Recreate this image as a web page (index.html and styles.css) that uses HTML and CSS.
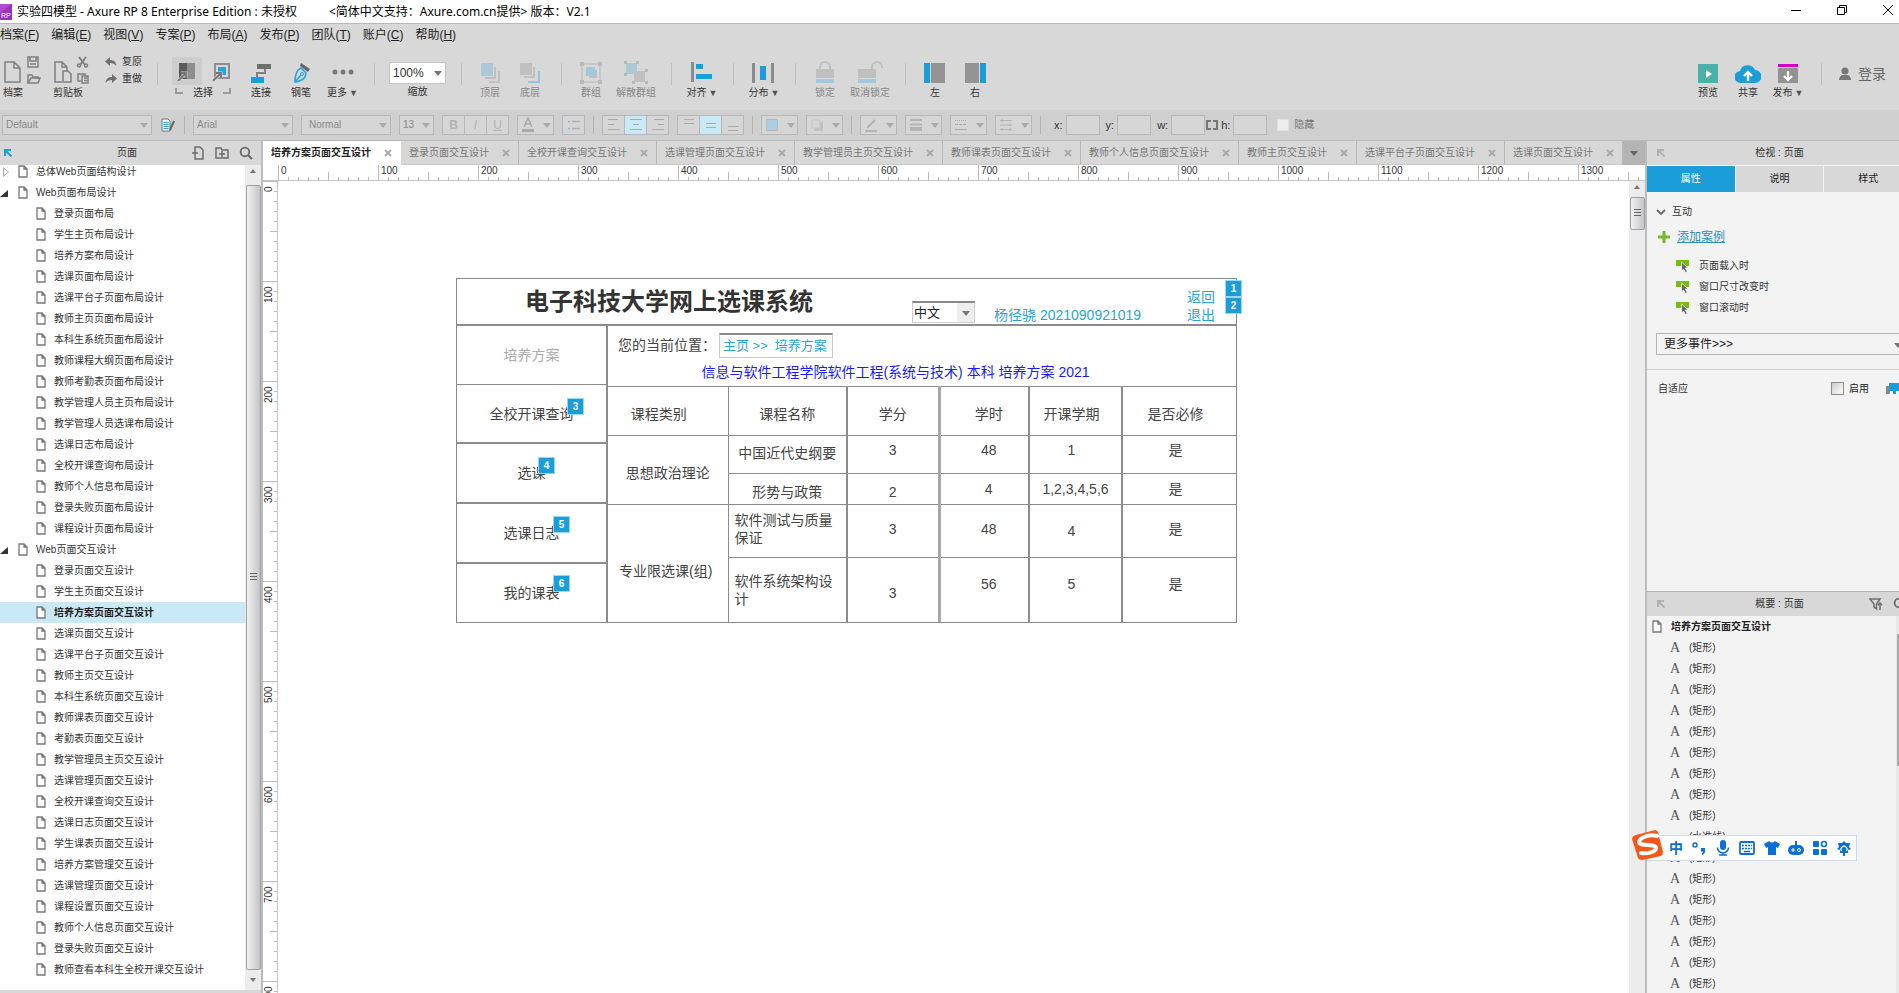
FILE: index.html
```html
<!DOCTYPE html>
<html lang="zh-CN">
<head>
<meta charset="utf-8">
<title>实验四模型 - Axure RP 8</title>
<link rel="stylesheet" href="styles.css">
</head>
<body>
<svg class="defs" aria-hidden="true">
  <symbol id="doc" viewBox="0 0 10 13"><path d="M1 1h5l3 3v8H1z M6 1v3h3" fill="#fff" stroke="#777" stroke-width="1.3"/></symbol>
  <symbol id="x" viewBox="0 0 8 8"><path d="M1 1l6 6M7 1l-6 6" stroke="#a8a8a8" stroke-width="1.8"/></symbol>
  <symbol id="down" viewBox="0 0 8 5"><path d="M0 0h8L4 5z" fill="currentColor"/></symbol>
  <symbol id="corner" viewBox="0 0 8 8"><path d="M1 7V1h6M1.500 1.500l6 6" fill="none" stroke="currentColor" stroke-width="2"/></symbol>
  <symbol id="lens" viewBox="0 0 13 13"><circle cx="5.500" cy="5.500" r="4" fill="none" stroke="#6c6c6c" stroke-width="1.700"/><path d="M8.500 8.500l3.500 3.500" stroke="#6c6c6c" stroke-width="2"/></symbol>
  <symbol id="event" viewBox="0 0 14 14"><path d="M0 1h13v6H0z" fill="#76bd0f"/><path d="M5.500 3v9l2-2 1.800 3.500 2-1L9.500 9H12z" fill="#666" stroke="#f3f3f3" stroke-width=".8"/></symbol>
</svg>

<header class="titlebar">
  <svg class="logo" viewBox="0 0 12 16"><path d="M0 0h12v16H0z" fill="#9b2fc0"/><path d="M0 0h12L0 9z" fill="#b04ad0"/><text x="1" y="14" font-size="7" fill="#fff" font-family="Liberation Sans">RP</text></svg>
  <h1 class="window-name">实验四模型 - Axure RP 8 Enterprise Edition : 未授权</h1>
  <span class="window-note">&lt;简体中文支持：Axure.com.cn提供&gt; 版本：V2.1</span>
  <div class="window-buttons">
    <button aria-label="最小化"><svg viewBox="0 0 12 12"><path d="M1 6.500h10" stroke="#000"/></svg></button>
    <button aria-label="还原"><svg viewBox="0 0 12 12"><path d="M1.500 3.500h7v7h-7zM3.500 3.500v-2h7v7h-2" fill="none" stroke="#000"/></svg></button>
    <button aria-label="关闭"><svg viewBox="0 0 12 12"><path d="M1 1l10 10M11 1L1 11" stroke="#000"/></svg></button>
  </div>
</header>

<nav class="menubar">
  <button>档案(<u>F</u>)</button><button>编辑(<u>E</u>)</button><button>视图(<u>V</u>)</button><button>专案(<u>P</u>)</button><button>布局(<u>A</u>)</button><button>发布(<u>P</u>)</button><button>团队(<u>T</u>)</button><button>账户(<u>C</u>)</button><button>帮助(<u>H</u>)</button>
</nav>

<div class="toolbar">
  <button class="tool pack"><svg viewBox="0 0 50 32" fill="none" stroke="#808080" stroke-width="1.500"><path d="M5 7h9l6 6v14H5zM14 7v6h6"/><path d="M28 2h10v10H28zM30 2v4h6V2M30 9h6" /><path d="M28 28V20h4l1 2h5v2M28 28l3-5h9l-2 5z"/></svg><span>档案</span></button>
  <button class="tool pack"><svg viewBox="0 0 50 32" fill="none" stroke="#808080" stroke-width="1.500"><path d="M12 27H5V7h7l5 5v4M12 7v5h5M13 16h5l3 3v8h-8z"/><path d="M29 2l6 8M36 2l-6 8" stroke-width="2"/><circle cx="29" cy="10.500" r="1.500"/><circle cx="36" cy="10.500" r="1.500"/><path d="M31 26h-3v-7h7v2M32 21h6v7h-6zM34 23h3M34 25.500h3"/></svg><span>剪贴板</span></button>
  <div class="history">
    <button><svg viewBox="0 0 12 10"><path d="M0 4.500L5 0v3c4 0 6 2 6.500 6C10 7 8 6 5 6v3z" fill="#707070"/></svg>复原</button>
    <button><svg viewBox="0 0 12 10"><path d="M12 4.500L7 0v3C3 3 1 5 .500 9 2 7 4 6 7 6v3z" fill="#707070"/></svg>重做</button>
  </div>
  <i class="sep"></i>
  <div class="picker">
    <div class="picker-modes">
      <button class="on" aria-label="相交选择"><svg viewBox="0 0 20 20"><path d="M2 2h8v16H2z" fill="#5c5c5c"/><path d="M10 2h8v16h-8z" fill="#8e8e8e"/><path d="M1 20l7-7M4 12h5v5" fill="none" stroke="#cdcdcd" stroke-width="3"/><path d="M1 20l7-7M4 12h5v5" fill="none" stroke="#777" stroke-width="1.800"/></svg></button>
      <button aria-label="包含选择"><svg viewBox="0 0 20 20"><path d="M3 3h14v14H3z" fill="none" stroke="#8e8e8e" stroke-width="2"/><path d="M6 6h8v8H6z" fill="#2ba2dc"/><path d="M1 20l7-7M4 12h5v5" fill="none" stroke="#d8d8d8" stroke-width="3"/><path d="M1 20l7-7M4 12h5v5" fill="none" stroke="#777" stroke-width="1.800"/></svg></button>
    </div>
    <div class="picker-label"><i class="hook-left"></i>选择<i class="hook-right"></i></div>
  </div>
  <button class="tool"><svg viewBox="0 0 26 26"><path d="M9 3h14v5H9z" fill="#6e6e6e"/><path d="M3 16h13v6H3z" fill="#1b9dd9"/><path d="M17 8v4H9v4" fill="none" stroke="#808080" stroke-width="2"/></svg><span>连接</span></button>
  <button class="tool"><svg viewBox="0 0 26 26"><path d="M7 21c0-7 1-12 6-14l5 5c0 5-4 8-11 9zM7 21l6-7" fill="none" stroke="#2ba2dc" stroke-width="1.600"/><circle cx="14" cy="13" r="1.500" fill="none" stroke="#2ba2dc"/><path d="M13 2l9 6-2 3-8-6z" fill="#666"/></svg><span>钢笔</span></button>
  <button class="tool w43"><svg viewBox="0 0 26 26" fill="#777"><circle cx="5" cy="11" r="2.500"/><circle cx="13" cy="11" r="2.500"/><circle cx="21" cy="11" r="2.500"/></svg><span>更多<b>▼</b></span></button>
  <i class="sep"></i>
  <div class="zoomer"><select id="zoom"><option>100%</option></select><svg class="caret"><use href="#down"/></svg><label for="zoom">缩放</label></div>
  <i class="sep"></i>
  <button class="tool w38 off"><svg viewBox="0 0 26 26"><path d="M4 2h12v13H4z" fill="#7fbbd9"/><path d="M17 6v10H8v2h11V6zM21 10v10H12v2h11V10z" fill="#aaa"/></svg><span>顶层</span></button>
  <button class="tool w42 off"><svg viewBox="0 0 26 26"><path d="M3 2h12v12H3z" fill="#aaa"/><path d="M16 6v9H7v2h11V6z" fill="#aaa"/><path d="M21 10v10H11v2h12V10z" fill="#53b2df"/></svg><span>底层</span></button>
  <i class="sep"></i>
  <button class="tool off"><svg viewBox="0 0 26 26"><path d="M4 3h18v18H4z" fill="none" stroke="#999"/><path d="M11 9h8v8h-8z" fill="#aaa"/><path d="M8 6h9v9H8z" fill="#6fb9de"/><path d="M2 1h4v4H2zM20 1h4v4h-4zM2 19h4v4H2zM20 19h4v4h-4z" fill="#999"/></svg><span>群组</span></button>
  <button class="tool w50 off"><svg viewBox="0 0 26 26"><path d="M3 2h11v11H3z" fill="#7fbbd9"/><path d="M11 10h11v11H11z" fill="#aaa"/><path d="M1 0h3v3H1zM13 0h3v3h-3zM1 12h3v3H1zM22 8h3v3h-3zM9 20h3v3H9zM22 20h3v3h-3z" fill="#999"/></svg><span>解散群组</span></button>
  <i class="sep"></i>
  <button class="tool w42"><svg viewBox="0 0 26 26"><path d="M2 1h3v20H2z" fill="#8c8c8c"/><path d="M7 3h7v5H7zM7 13h16v5H7z" fill="#1b9dd9"/></svg><span>对齐<b>▼</b></span></button>
  <i class="sep"></i>
  <button class="tool w42"><svg viewBox="0 0 26 26"><path d="M1 2h3v20H1zM20 2h3v20h-3z" fill="#8c8c8c"/><path d="M9 5h6v14H9z" fill="#1b9dd9"/></svg><span>分布<b>▼</b></span></button>
  <i class="sep"></i>
  <button class="tool off"><svg viewBox="0 0 26 26"><path d="M8 8V6a5 5 0 0 1 10 0v2" fill="none" stroke="#aaa" stroke-width="2"/><path d="M4 8h18v9H4z" fill="#aaa"/><path d="M4 18h18v4H4z" fill="#6fb9de"/></svg><span>锁定</span></button>
  <button class="tool w50 off"><svg viewBox="0 0 26 26"><path d="M15 8V6a5 5 0 0 1 10 0v1" fill="none" stroke="#aaa" stroke-width="2"/><path d="M1 8h18v9H1z" fill="#aaa"/><path d="M1 18h18v4H1z" fill="#6fb9de"/></svg><span>取消锁定</span></button>
  <i class="sep"></i>
  <button class="tool"><svg viewBox="0 0 26 26"><path d="M2 2h6v20H2z" fill="#1b9dd9"/><path d="M9 2h14v20H9z" fill="#949494"/></svg><span>左</span></button>
  <button class="tool"><svg viewBox="0 0 26 26"><path d="M3 2h14v20H3z" fill="#949494"/><path d="M18 2h6v20h-6z" fill="#1b9dd9"/></svg><span>右</span></button>
  <div class="toolbar-end">
    <button class="tool"><svg viewBox="0 0 26 26"><path d="M3 3h20v19H3z" fill="#4bb0a5"/><path d="M11 9l6 4-6 4z" fill="#fff"/></svg><span>预览</span></button>
    <button class="tool"><svg viewBox="0 0 26 26"><path d="M6 22a6 6 0 0 1-1-12 8 8 0 0 1 15-1 6.500 6.500 0 0 1 0 13z" fill="#1b9dd9"/><path d="M13 20v-8M9 15l4-4 4 4" fill="none" stroke="#fff" stroke-width="2.400"/></svg><span>共享</span></button>
    <button class="tool"><svg viewBox="0 0 26 26"><path d="M3 3h20v3H3z" fill="#d800c0"/><path d="M3 7h20v15H3z" fill="#929292"/><path d="M13 10v9M9 15l4 4 4-4" fill="none" stroke="#fff" stroke-width="2.200"/></svg><span>发布<b>▼</b></span></button>
    <i class="sep"></i>
    <button class="login"><svg viewBox="0 0 14 14" fill="#777"><circle cx="7" cy="4" r="3.500"/><path d="M1 13c0-3 2-5 4-5h4c2 0 4 2 4 5z"/></svg>登录</button>
  </div>
</div>

<div class="formatbar">
  <div class="drop drop-style"><select aria-label="样式"><option>Default</option></select><svg class="caret"><use href="#down"/></svg></div>
  <button class="plain" aria-label="样式管理"><svg viewBox="0 0 14 14"><path d="M1 1h6l2 2v10H1z" fill="#e9f5fb" stroke="#777"/><path d="M2.500 4.500h5M2.500 6.500h5M2.500 8.500h5M2.500 10.500h5" stroke="#2ba2dc"/><path d="M9 12l4-9" stroke="#666" stroke-width="2"/></svg></button>
  <i class="rule"></i>
  <div class="drop drop-font"><select aria-label="字体"><option>Arial</option></select><svg class="caret"><use href="#down"/></svg></div>
  <div class="drop drop-weight"><select aria-label="字形"><option>Normal</option></select><svg class="caret"><use href="#down"/></svg></div>
  <div class="drop drop-size"><select aria-label="字号"><option>13</option></select><svg class="caret"><use href="#down"/></svg></div>
  <div class="seg"><button><b>B</b></button><button><i>I</i></button><button><u>U</u></button></div>
  <button class="split" aria-label="文字颜色"><svg viewBox="0 0 16 16"><path d="M4 10l4-9 4 9M5.500 7h5" fill="none" stroke="#aaa" stroke-width="1.500"/><path d="M2 12h12v3H2z" fill="#aaa"/></svg><svg class="caret"><use href="#down"/></svg></button>
  <div class="seg"><button aria-label="列表"><svg viewBox="0 0 16 16"><path d="M2 4.500h2M2 11.500h2" stroke="#7fbbd9" stroke-width="1.500"/><path d="M6 4.500h8M6 11.500h8" stroke="#b0b0b0" stroke-width="1.500"/></svg></button></div>
  <i class="rule"></i>
  <div class="seg">
    <button aria-label="左对齐"><svg viewBox="0 0 16 16"><path d="M2 2.500h10M2 7.500h6M2 12.500h12"/></svg></button>
    <button class="on" aria-label="居中"><svg viewBox="0 0 16 16"><path d="M2 2.500h12M5 7.500h6M2 12.500h12"/></svg></button>
    <button aria-label="右对齐"><svg viewBox="0 0 16 16"><path d="M4 2.500h10M8 7.500h6M2 12.500h12"/></svg></button>
  </div>
  <div class="seg">
    <button aria-label="顶部"><svg viewBox="0 0 16 16"><path d="M3 2.500h10M3 6.500h10"/></svg></button>
    <button class="on" aria-label="中部"><svg viewBox="0 0 16 16"><path d="M3 6.500h10M3 10.500h10"/></svg></button>
    <button aria-label="底部"><svg viewBox="0 0 16 16"><path d="M3 9.500h10M3 13.500h10"/></svg></button>
  </div>
  <i class="rule"></i>
  <button class="split" aria-label="填充"><svg viewBox="0 0 16 16"><path d="M2.500 2.500h11v11h-11z" fill="#a9cfe3" stroke="#b8b8b8"/></svg><svg class="caret"><use href="#down"/></svg></button>
  <button class="split" aria-label="阴影"><svg viewBox="0 0 16 16"><path d="M5 5h9v9H5z" fill="#c2c2c2"/><path d="M3 3h8v8H3z" fill="#d6d6d6" stroke="#c4c4c4"/></svg><svg class="caret"><use href="#down"/></svg></button>
  <i class="rule"></i>
  <button class="split" aria-label="线条颜色"><svg viewBox="0 0 16 16"><path d="M4 11l8-8M2 14h12" stroke="#b4b4b4" stroke-width="2"/></svg><svg class="caret"><use href="#down"/></svg></button>
  <button class="split" aria-label="线宽"><svg viewBox="0 0 16 16"><path d="M2 3h12M2 7.500h12" stroke="#b4b4b4" stroke-width="2"/><path d="M2 12h12" stroke="#b4b4b4" stroke-width="4"/></svg><svg class="caret"><use href="#down"/></svg></button>
  <button class="split" aria-label="线型"><svg viewBox="0 0 16 16"><path d="M2 3.500h12" stroke="#aaa" stroke-dasharray="1 1"/><path d="M2 7.500h12" stroke="#aaa" stroke-dasharray="3 1"/><path d="M2 12.500h12" stroke="#aaa"/></svg><svg class="caret"><use href="#down"/></svg></button>
  <button class="split" aria-label="箭头"><svg viewBox="0 0 16 16"><path d="M2 3.500h12M2 8h12M2 12.500h12M4 2v3M12 6.500v3M4 11v3M12 11v3" stroke="#b4b4b4"/></svg><svg class="caret"><use href="#down"/></svg></button>
  <i class="rule"></i>
  <div class="geometry">
    <label class="field">x:<input></label>
    <label class="field">y:<input></label>
    <label class="field">w:<input></label>
    <label class="field linked"><svg viewBox="0 0 12 10"><path d="M5 1H1v8h4M7 1h4v8H7" fill="none" stroke="#777" stroke-width="2"/></svg>h:<input></label>
  </div>
  <label class="hide"><input type="checkbox">隐藏</label>
</div>

<div class="workspace">
  <aside class="pages">
    <div class="panel-head"><svg class="pin blue"><use href="#corner"/></svg><h2>页面</h2>
      <div class="head-tools">
        <button aria-label="新增页面"><svg viewBox="0 0 14 14"><path d="M4 4V1h5l3 3v9H4v-3M1 7h6M4 4v6" fill="none" stroke="#6c6c6c" stroke-width="1.500"/></svg></button>
        <button aria-label="新增文件夹"><svg viewBox="0 0 14 14"><path d="M1 12V2h5l1 2h6v8zM4 8h6M7 5v6" fill="none" stroke="#6c6c6c" stroke-width="1.500"/></svg></button>
        <button aria-label="搜索"><svg viewBox="0 0 13 13"><use href="#lens"/></svg></button>
      </div>
    </div>
    <div class="pages-body">
      <ul class="tree">
        <li class="top shut"><a href="#"><svg><use href="#doc"/></svg>总体Web页面结构设计</a></li>
        <li class="top open"><a href="#"><svg><use href="#doc"/></svg>Web页面布局设计</a></li>
        <li><a href="#"><svg><use href="#doc"/></svg>登录页面布局</a></li>
        <li><a href="#"><svg><use href="#doc"/></svg>学生主页布局设计</a></li>
        <li><a href="#"><svg><use href="#doc"/></svg>培养方案布局设计</a></li>
        <li><a href="#"><svg><use href="#doc"/></svg>选课页面布局设计</a></li>
        <li><a href="#"><svg><use href="#doc"/></svg>选课平台子页面布局设计</a></li>
        <li><a href="#"><svg><use href="#doc"/></svg>教师主页页面布局设计</a></li>
        <li><a href="#"><svg><use href="#doc"/></svg>本科生系统页面布局设计</a></li>
        <li><a href="#"><svg><use href="#doc"/></svg>教师课程大纲页面布局设计</a></li>
        <li><a href="#"><svg><use href="#doc"/></svg>教师考勤表页面布局设计</a></li>
        <li><a href="#"><svg><use href="#doc"/></svg>教学管理人员主页布局设计</a></li>
        <li><a href="#"><svg><use href="#doc"/></svg>教学管理人员选课布局设计</a></li>
        <li><a href="#"><svg><use href="#doc"/></svg>选课日志布局设计</a></li>
        <li><a href="#"><svg><use href="#doc"/></svg>全校开课查询布局设计</a></li>
        <li><a href="#"><svg><use href="#doc"/></svg>教师个人信息布局设计</a></li>
        <li><a href="#"><svg><use href="#doc"/></svg>登录失败页面布局设计</a></li>
        <li><a href="#"><svg><use href="#doc"/></svg>课程设计页面布局设计</a></li>
        <li class="top open"><a href="#"><svg><use href="#doc"/></svg>Web页面交互设计</a></li>
        <li><a href="#"><svg><use href="#doc"/></svg>登录页面交互设计</a></li>
        <li><a href="#"><svg><use href="#doc"/></svg>学生主页面交互设计</a></li>
        <li class="current"><a href="#"><svg><use href="#doc"/></svg>培养方案页面交互设计</a></li>
        <li><a href="#"><svg><use href="#doc"/></svg>选课页面交互设计</a></li>
        <li><a href="#"><svg><use href="#doc"/></svg>选课平台子页面交互设计</a></li>
        <li><a href="#"><svg><use href="#doc"/></svg>教师主页交互设计</a></li>
        <li><a href="#"><svg><use href="#doc"/></svg>本科生系统页面交互设计</a></li>
        <li><a href="#"><svg><use href="#doc"/></svg>教师课表页面交互设计</a></li>
        <li><a href="#"><svg><use href="#doc"/></svg>考勤表页面交互设计</a></li>
        <li><a href="#"><svg><use href="#doc"/></svg>教学管理员主页交互设计</a></li>
        <li><a href="#"><svg><use href="#doc"/></svg>选课管理页面交互设计</a></li>
        <li><a href="#"><svg><use href="#doc"/></svg>全校开课查询交互设计</a></li>
        <li><a href="#"><svg><use href="#doc"/></svg>选课日志页面交互设计</a></li>
        <li><a href="#"><svg><use href="#doc"/></svg>学生课表页面交互设计</a></li>
        <li><a href="#"><svg><use href="#doc"/></svg>培养方案管理交互设计</a></li>
        <li><a href="#"><svg><use href="#doc"/></svg>选课管理页面交互设计</a></li>
        <li><a href="#"><svg><use href="#doc"/></svg>课程设置页面交互设计</a></li>
        <li><a href="#"><svg><use href="#doc"/></svg>教师个人信息页面交互设计</a></li>
        <li><a href="#"><svg><use href="#doc"/></svg>登录失败页面交互设计</a></li>
        <li><a href="#"><svg><use href="#doc"/></svg>教师查看本科生全校开课交互设计</a></li>
      </ul>
      <div class="scroll"><i class="arrow up"></i><div class="thumb"></div><i class="arrow"></i></div>
    </div>
  </aside>

  <main class="editor">
    <div class="tabs">
      <button class="tab on">培养方案页面交互设计<svg><use href="#x"/></svg></button>
      <button class="tab">登录页面交互设计<svg><use href="#x"/></svg></button>
      <button class="tab">全校开课查询交互设计<svg><use href="#x"/></svg></button>
      <button class="tab">选课管理页面交互设计<svg><use href="#x"/></svg></button>
      <button class="tab">教学管理员主页交互设计<svg><use href="#x"/></svg></button>
      <button class="tab">教师课表页面交互设计<svg><use href="#x"/></svg></button>
      <button class="tab">教师个人信息页面交互设计<svg><use href="#x"/></svg></button>
      <button class="tab">教师主页交互设计<svg><use href="#x"/></svg></button>
      <button class="tab">选课平台子页面交互设计<svg><use href="#x"/></svg></button>
      <button class="tab">选课页面交互设计<svg><use href="#x"/></svg></button>
      <button class="tab-more" aria-label="更多页签"><svg><use href="#down"/></svg></button>
    </div>
    <div class="ruler-x"><span>0</span><span>100</span><span>200</span><span>300</span><span>400</span><span>500</span><span>600</span><span>700</span><span>800</span><span>900</span><span>1000</span><span>1100</span><span>1200</span><span>1300</span></div>
    <div class="stage">
      <div class="ruler-y"><span>0</span><span>100</span><span>200</span><span>300</span><span>400</span><span>500</span><span>600</span><span>700</span><span>800</span></div>
      <div class="canvas">
        <div class="mock">
          <div class="mock-head">
            <h2>电子科技大学网上选课系统</h2>
            <div class="lang"><select aria-label="语言"><option>中文</option></select><svg class="caret"><use href="#down"/></svg></div>
            <span class="user">杨径骁 2021090921019</span>
            <div class="exits"><a href="#">返回</a><a href="#">退出</a></div>
          </div>
          <div class="mock-body">
            <nav class="mock-nav">
              <button class="idle">培养方案</button><button>全校开课查询</button><button>选课</button><button>选课日志</button><button>我的课表</button>
            </nav>
            <div class="mock-main">
              <div class="where"><span>您的当前位置：</span><div class="crumbs"><a href="#">主页 &gt;&gt;</a><a href="#">培养方案</a></div></div>
              <p class="plan">信息与软件工程学院软件工程(系统与技术) 本科 培养方案 2021</p>
              <table>
                <colgroup><col class="c1"><col class="c2"><col class="c3"><col class="c4"><col class="c5"><col></colgroup>
                <thead><tr class="r1"><th class="kind">课程类别</th><th>课程名称</th><th>学分</th><th class="hours">学时</th><th class="term">开课学期</th><th class="must">是否必修</th></tr></thead>
                <tbody>
                  <tr class="r2"><td rowspan="2" class="down">思想政治理论</td><td class="lift">中国近代史纲要</td><td class="up">3</td><td class="up hours">48</td><td class="up term">1</td><td class="up must">是</td></tr>
                  <tr class="r3"><td class="down">形势与政策</td><td class="down">2</td><td class="hours">4</td><td>1,2,3,4,5,6</td><td class="must">是</td></tr>
                  <tr class="r4"><td rowspan="2" class="low">专业限选课(组)</td><td class="wrap lift">软件测试与质量保证</td><td class="lift">3</td><td class="hours lift">48</td><td class="term">4</td><td class="must lift">是</td></tr>
                  <tr class="r5"><td class="wrap">软件系统架构设计</td><td class="down">3</td><td class="high hours">56</td><td class="high term">5</td><td class="high must">是</td></tr>
                </tbody>
              </table>
            </div>
          </div>
          <i class="note n1">1</i><i class="note n2">2</i><i class="note n3">3</i><i class="note n4">4</i><i class="note n5">5</i><i class="note n6">6</i>
        </div>
      </div>
      <div class="scroll"><i class="arrow up"></i><div class="thumb short"></div></div>
    </div>
  </main>

  <aside class="side">
    <section class="inspector">
      <div class="panel-head"><svg class="pin"><use href="#corner"/></svg><h2>检视 : 页面</h2></div>
      <div class="side-tabs"><button class="on">属性</button><button>说明</button><button>样式</button></div>
      <div class="group-name"><svg viewBox="0 0 10 8"><path d="M1 2l4 4 4-4" fill="none" stroke="#666" stroke-width="1.800"/></svg>互动</div>
      <div class="add-case"><svg viewBox="0 0 12 12"><path d="M6 0v12M0 6h12" stroke="#76b82a" stroke-width="3"/></svg><a href="#">添加案例</a></div>
      <ul class="events">
        <li><svg><use href="#event"/></svg>页面载入时</li>
        <li><svg><use href="#event"/></svg>窗口尺寸改变时</li>
        <li><svg><use href="#event"/></svg>窗口滚动时</li>
      </ul>
      <div class="more-events"><select aria-label="更多事件"><option>更多事件&gt;&gt;&gt;</option></select><svg class="caret"><use href="#down"/></svg></div>
      <div class="adaptive"><span>自适应</span><label><input type="checkbox">启用</label><svg viewBox="0 0 18 12"><path d="M0 3h4v8H0z" fill="#888"/><path d="M3 0h15v8h-2v3h-3V8h-3v3H7V8H3z" fill="#1b9dd9"/></svg></div>
    </section>
    <section class="outline">
      <div class="panel-head"><svg class="pin"><use href="#corner"/></svg><h2>概要 : 页面</h2>
        <div class="head-tools"><button aria-label="筛选"><svg viewBox="0 0 14 14"><path d="M1 2h10L7.500 7v5L5 10V7zM11 13V6M9 8l2-2 2 2" fill="none" stroke="#6c6c6c" stroke-width="1.500"/></svg></button><button aria-label="搜索"><svg viewBox="0 0 13 13"><use href="#lens"/></svg></button></div>
      </div>
      <div class="outline-body">
        <ul class="widgets">
          <li class="root"><svg><use href="#doc"/></svg>培养方案页面交互设计</li>
          <li><i>A</i>(矩形)</li><li><i>A</i>(矩形)</li><li><i>A</i>(矩形)</li><li><i>A</i>(矩形)</li><li><i>A</i>(矩形)</li><li><i>A</i>(矩形)</li><li><i>A</i>(矩形)</li><li><i>A</i>(矩形)</li><li><i>A</i>(矩形)</li>
          <li><i class="dash"></i>(水准线)</li>
          <li><i>A</i>(矩形)</li><li><i>A</i>(矩形)</li><li><i>A</i>(矩形)</li><li><i>A</i>(矩形)</li><li><i>A</i>(矩形)</li><li><i>A</i>(矩形)</li><li><i>A</i>(矩形)</li>
        </ul>
        <div class="outline-scroll"></div>
      </div>
    </section>
  </aside>
</div>

<div class="ime">
  <svg class="ime-logo" viewBox="0 0 32 30"><path d="M4 5L23 0q2 0 3 2l5 20q0 3-2 4L10 30q-3 0-4-2L0 9q0-3 4-4z" fill="#f4571b"/><path d="M25 6C18 4 8 7 7 12c0 5 17 1 17 6 0 4-9 6-15 5" fill="none" stroke="#fff" stroke-width="4" stroke-linecap="round"/></svg>
  <b>中</b>
  <svg viewBox="0 0 16 16"><circle cx="4" cy="5" r="2" fill="none" stroke="#0a6fd8" stroke-width="1.500"/><path d="M10 8h4v3q0 3-3 4v-2q1-.5 1-1.500h-2z" fill="#0a6fd8"/></svg>
  <svg viewBox="0 0 16 16"><rect x="5" y="0" width="6" height="10" rx="3" fill="#0a6fd8"/><path d="M2.500 7.500a5.500 5.500 0 0 0 11 0M8 13v2M4 15h8" fill="none" stroke="#0a6fd8" stroke-width="1.500"/></svg>
  <svg viewBox="0 0 16 16"><rect x="1" y="2" width="14" height="12" rx="1" fill="none" stroke="#0a6fd8" stroke-width="1.800"/><path d="M3 5.500h10M3 8.500h10" stroke="#0a6fd8" stroke-width="1.600" stroke-dasharray="2 1"/><path d="M5 11.500h6" stroke="#0a6fd8" stroke-width="1.600"/></svg>
  <svg viewBox="0 0 16 16"><path d="M0 4l5-3q3 3 6 0l5 3-2 4-2-1v8H4V7L2 8z" fill="#0a6fd8"/></svg>
  <svg viewBox="0 0 16 16"><rect x="0" y="5" width="16" height="10" rx="5" fill="#0a6fd8"/><path d="M8 1v5" stroke="#0a6fd8" stroke-width="2"/><path d="M3 10h4M5 8v4" stroke="#fff"/><circle cx="11" cy="10" r="1.500" fill="none" stroke="#fff"/></svg>
  <svg viewBox="0 0 16 16"><rect x="1" y="1" width="6" height="6" rx="1" fill="#0a6fd8"/><circle cx="12" cy="4" r="2.500" fill="none" stroke="#0a6fd8" stroke-width="1.600"/><rect x="1" y="9" width="6" height="6" rx="1" fill="#0a6fd8"/><rect x="9" y="9" width="6" height="6" rx="1" fill="#0a6fd8"/></svg>
  <svg viewBox="0 0 16 16"><path d="M8 1l2 2h4l-1 4 2 2-3 1v3H4v-3L1 9l2-2-1-4h4z" fill="#0a6fd8"/><path d="M5.500 11a3 3 0 1 1 5 0" fill="none" stroke="#fff" stroke-width="1.200"/><path d="M8 8v8" stroke="#0a6fd8" stroke-width="2"/></svg>
</div>
</body>
</html>
```

FILE: styles.css
```css
* { box-sizing: border-box; }
body {
  margin: 0;
  height: 100vh;
  display: flex;
  flex-direction: column;
  overflow: hidden;
  background: #d8d8d8;
  color: #333;
  font: 10px/12px "Liberation Sans", "Noto Sans CJK SC", sans-serif;
}
button, input, select { font: inherit; color: inherit; margin: 0; }
button { background: none; border: 0; padding: 0; white-space: nowrap; }
select { appearance: none; border: 0; background: none; width: 100%; height: 100%; padding: 0; border-radius: 0; }
h1, h2, p, ul { margin: 0; padding: 0; font-weight: normal; font-size: inherit; }
ul { list-style: none; }
a { color: inherit; text-decoration: none; }
svg { display: block; flex: none; }
.defs { position: absolute; width: 0; height: 0; }
.caret { width: 8px; height: 5px; pointer-events: none; }

/* title bar */
.titlebar { flex: none; display: flex; align-items: center; height: 24px; background: #fff; border-bottom: 1px solid #b8b8b8; color: #000; font: 12px/20px "Noto Sans", "Noto Sans CJK SC", sans-serif; white-space: pre; }
.logo { width: 12px; height: 16px; margin-right: 5px; }
.window-note { margin-left: 32px; }
.window-buttons { margin-left: auto; display: flex; gap: 34px; padding: 0 5px 3px 0; }
.window-buttons svg { width: 12px; height: 12px; }

/* menu and toolbar */
.menubar { flex: none; display: flex; gap: 12px; height: 22px; align-items: center; font-size: 12px; color: #222; }
.toolbar { flex: none; display: flex; height: 64px; }
.tool { width: 40px; padding-top: 15px; display: flex; flex-direction: column; align-items: center; flex: none; }
.tool svg { width: 26px; height: 26px; }
.tool b { font-size: 9px; font-weight: normal; margin-left: 2px; color: #555; }
.pack { width: 50px; padding-top: 9px; align-items: flex-start; }
.pack svg { width: 50px; height: 32px; }
.pack span { padding-left: 3px; }
.off { opacity: .5; }
.w38 { width: 38px; }
.w42 { width: 42px; }
.w43 { width: 43px; }
.w50 { width: 50px; }
.sep { flex: none; width: 20px; height: 22px; margin-top: 17px; background: linear-gradient(#c0c0c0, #c0c0c0) center / 1px 100% no-repeat; }
.history { width: 47px; padding: 10px 0 0 5px; display: flex; flex-direction: column; gap: 5px; flex: none; }
.history button { display: flex; gap: 5px; align-items: center; }
.history svg { width: 12px; height: 10px; }
.picker { flex: none; width: 74px; padding: 11px 0 0 5px; }
.picker-modes { display: flex; gap: 5px; }
.picker-modes button { width: 30px; height: 28px; display: flex; align-items: center; justify-content: center; }
.picker-modes .on { background: #cdcdcd; }
.picker-modes svg { width: 20px; height: 20px; }
.picker-label { display: flex; justify-content: center; gap: 10px; width: 62px; padding-top: 2px; }
.hook-left, .hook-right { width: 8px; height: 6px; border: solid #999; border-width: 0 0 2px 2px; margin-top: 1px; }
.hook-right { border-width: 0 2px 2px 0; }
.zoomer { position: relative; flex: none; width: 67px; padding: 16px 5px 0; text-align: center; }
.zoomer select { width: 57px; height: 22px; background: #fff; border: 1px solid #c4c4c4; padding-left: 3px; font-size: 12px; display: block; }
.zoomer .caret { position: absolute; right: 9px; top: 25px; color: #777; }
.zoomer label { display: block; padding-top: 2px; }
.toolbar-end { margin-left: auto; display: flex; padding-right: 13px; }
.toolbar-end .sep { margin-left: 3px; }
.login { display: flex; align-items: center; gap: 6px; font-size: 14px; color: #666; padding: 0 0 8px 7px; }
.login svg { width: 14px; height: 14px; }

/* format bar */
.formatbar { flex: none; display: flex; align-items: center; gap: 8px; height: 31px; padding: 0 2px; background: #d0d0d0; border-bottom: 1px solid #bbb; color: #888; }
.drop { position: relative; height: 20px; border: 1px solid #b8b8b8; background: #d6d6d6; padding-left: 3px; flex: none; }
.drop .caret { position: absolute; right: 3px; top: 7px; color: #aaa; }
.drop-style { width: 150px; }
.drop-font { width: 100px; }
.drop-weight { width: 90px; padding-left: 7px; }
.drop-size { width: 35px; }
.plain svg { width: 16px; height: 14px; }
.rule { width: 1px; height: 18px; background: #b4b4b4; }
.seg { display: flex; border: 1px solid #b8b8b8; height: 20px; background: #d6d6d6; flex: none; }
.seg button { width: 21px; display: flex; align-items: center; justify-content: center; color: #b4b4b4; font-size: 12px; }
.seg button + button { border-left: 1px solid #b8b8b8; width: 22px; }
.seg svg { width: 16px; height: 16px; stroke: #aaa; stroke-width: 1; }
.seg .on { background: #c9e9f6; }
.split { width: 37px; height: 20px; border: 1px solid #b8b8b8; background: #d6d6d6; display: flex; align-items: center; justify-content: space-between; padding: 0 2px; flex: none; color: #aaa; }
.split svg:first-child { width: 16px; height: 16px; }
.geometry { display: flex; gap: 6px; padding-left: 5px; }
.field { display: flex; align-items: center; gap: 3px; color: #333; font-size: 11px; }
.field input { width: 34px; height: 20px; border: 1px solid #b8b8b8; background: #d6d6d6; padding: 0; }
.linked { margin-left: -5px; }
.linked svg { width: 12px; height: 10px; }
.hide { display: flex; align-items: center; gap: 5px; color: #777; margin-left: 2px; }
.hide input { appearance: none; width: 12px; height: 12px; background: #eee; border: 1px solid #e0e0e0; }

/* panels */
.workspace { flex: 1; min-height: 0; display: flex; }
.panel-head { position: relative; flex: none; height: 24px; background: #d8d8d8; display: flex; align-items: center; justify-content: center; }
.pin { position: absolute; left: 10px; top: 8px; width: 8px; height: 8px; color: #b0b0b0; }
.pin.blue { left: 4px; color: #1b9dd9; }
.head-tools { position: absolute; right: 8px; top: 5px; display: flex; gap: 10px; }
.head-tools svg { width: 14px; height: 14px; }
.pages { flex: none; width: 263px; display: flex; flex-direction: column; border-right: 2px solid #bcbcbc; padding-bottom: 3px; }
.pages .panel-head { padding-right: 7px; }
.pages-body { flex: 1; min-height: 0; display: flex; background: #fff; overflow: hidden; }
.tree { flex: 1; margin-top: -4px; }
.tree li { height: 21px; padding-left: 36px; position: relative; }
.tree .top { padding-left: 18px; }
.tree a { display: flex; align-items: center; gap: 8px; height: 21px; }
.tree svg { width: 10px; height: 13px; }
.tree .current { background: #c9e9f6; font-weight: bold; color: #222; }
.shut::before { content: ""; position: absolute; left: 3px; top: 6px; border: solid transparent; border-width: 5px 0 5px 6px; border-left-color: #aaa; }
.shut::after { content: ""; position: absolute; left: 4px; top: 8px; border: solid transparent; border-width: 3px 0 3px 4px; border-left-color: #fff; }
.open::before { content: ""; position: absolute; left: 0; top: 8px; border: solid transparent; border-width: 0 0 7px 8px; border-bottom-color: #333; }
.scroll { flex: none; width: 16px; background: #ececec; display: flex; flex-direction: column; align-items: center; }
.arrow { height: 20px; width: 16px; display: flex; align-items: center; justify-content: center; flex: none; }
.arrow::before { content: ""; border: solid transparent; border-width: 4px 3px 0; border-top-color: #777; }
.arrow.up::before { border-width: 0 3px 4px; border-bottom-color: #777; }
.thumb { flex: 1; width: 15px; border: 1px solid #a0a0a0; border-radius: 2px; background: repeating-linear-gradient(#666 0 1px, transparent 1px 3px) center / 7px 9px no-repeat, linear-gradient(90deg, #f2f2f2, #c4c4c8); }
.thumb.short { flex: none; height: 33px; margin-top: -4px; }

/* editor */
.editor { flex: 1; min-width: 0; display: flex; flex-direction: column; border-right: 2px solid #bcbcbc; }
.tabs { flex: none; display: flex; height: 24px; }
.tab { flex: 1 1 auto; display: flex; align-items: center; justify-content: space-between; padding: 0 8px; gap: 6px; border-right: 1px solid #b8b8b8; border-bottom: 1px solid #c8c8c8; color: #777; }
.tab svg { width: 8px; height: 8px; }
.tab.on { background: #fff; border-color: #fff; color: #222; font-weight: bold; }
.tab-more { width: 22px; background: #b4b4b4; display: flex; align-items: center; justify-content: center; color: #666; }
.tab-more svg { width: 8px; height: 5px; }
.ruler-x { flex: none; height: 16px; padding-left: 15px; display: flex; overflow: hidden; border-bottom: 1px solid #c8c8c8; background:
  repeating-linear-gradient(90deg, #bbb 0 1px, transparent 1px 100px) 15px 0 / 100% 100% no-repeat,
  repeating-linear-gradient(90deg, #bbb 0 1px, transparent 1px 50px) 15px 7px / 100% 100% no-repeat,
  repeating-linear-gradient(90deg, #bbb 0 1px, transparent 1px 10px) 15px 12px / 100% 100% no-repeat, #fff; }
.ruler-x span { flex: none; width: 100px; padding-left: 3px; }
.stage { flex: 1; min-height: 0; display: flex; background: #fff; }
.ruler-y { flex: none; width: 15px; overflow: hidden; border-right: 1px solid #c8c8c8; background:
  repeating-linear-gradient(#bbb 0 1px, transparent 1px 100px) 0 0 / 100% 100% no-repeat,
  repeating-linear-gradient(#bbb 0 1px, transparent 1px 50px) 7px 0 / 100% 100% no-repeat,
  repeating-linear-gradient(#bbb 0 1px, transparent 1px 10px) 11px 0 / 100% 100% no-repeat, #fff; }
.ruler-y span { display: block; height: 100px; width: 12px; writing-mode: vertical-rl; transform: rotate(180deg); text-align: right; padding-bottom: 5px; }
.canvas { flex: 1; position: relative; overflow: hidden; }

/* the page drawn on the canvas */
.mock { position: absolute; left: 178px; top: 97px; width: 781px; border: 1px solid #888; font-size: 14px; line-height: 18px; color: #444; }
.mock a, .user { color: #2aa4d4; }
.mock-head { display: flex; height: 47px; border-bottom: 2px solid #8c8c8c; padding-left: 68px; align-items: flex-end; }
.mock-head h2 { font-size: 24px; line-height: 44px; font-weight: bold; color: #333; width: 387px; }
.lang { position: relative; width: 63px; height: 22px; margin-bottom: 1px; border: 1px solid #ccc; border-top: 2px solid #888; background: linear-gradient(#eee, #eee) right / 17px 100% no-repeat; color: #222; }
.lang select { font-size: 13px; line-height: 16px; padding-left: 1px; }
.lang .caret { position: absolute; right: 4px; top: 8px; color: #777; }
.user { margin-left: 19px; white-space: nowrap; }
.exits { margin-left: auto; margin-right: 21px; display: flex; flex-direction: column; }
.mock-body { display: flex; }
.mock-nav { width: 151px; border-right: 2px solid #8c8c8c; display: flex; flex-direction: column; flex: none; }
.mock-nav button { flex: 1; border-bottom: 2px solid #8c8c8c; }
.mock-nav button:last-child { border-bottom: 0; }
.mock-nav .idle { color: #aaa; border-bottom-width: 1px; }
.mock-main { flex: 1; min-width: 0; }
.where { display: flex; align-items: center; padding: 5px 0 0 10px; height: 33px; }
.where span { width: 101px; white-space: nowrap; }
.crumbs { display: flex; gap: 7px; align-items: center; height: 25px; width: 114px; border: 1px solid #ccc; border-top: 2px solid #888; padding: 0 3px; font-size: 13px; white-space: nowrap; }
.plan { height: 27px; line-height: 27px; text-align: center; color: #1a1aff; padding-right: 53px; }
table { width: 100%; border-collapse: collapse; table-layout: fixed; }
.c1 { width: 120px; }
.c2 { width: 119px; }
.c3 { width: 92px; }
.c4 { width: 90px; }
.c5 { width: 93px; }
th, td { border: 1px solid #8c8c8c; padding: 0; text-align: center; font-weight: normal; }
th { padding-top: 6px; }
th:nth-child(n+3), td:nth-last-child(-n+4) { border-left: 2px solid #8c8c8c; }
th:nth-child(4), td:nth-last-child(3) { border-left: 3px solid #a8a8a8; }
th:first-child, td:first-child { border-left: 0; }
.r3 td:first-child, .r5 td:first-child { border-left: 1px solid #8c8c8c; }
th:last-child, td:last-child { border-right: 0; }
.r5 td, td.low { border-bottom: 0; }
.r1 { height: 49px; }
.r2 { height: 38px; }
.r3 { height: 31px; }
.r4 { height: 53px; }
.r5 { height: 64px; }
.kind { padding-right: 18px; }
.hours { padding-left: 9px; }
.term { padding-right: 8px; }
.must { padding-right: 8px; }
.up { padding-bottom: 9px; }
.lift { padding-bottom: 4px; }
.down { padding-top: 6px; }
.high { padding-bottom: 12px; }
.low { padding: 16px 4px 0 0; }
.wrap { text-align: left; padding-left: 6px; padding-right: 6px; }
.note { position: absolute; width: 17px; height: 17px; background: #1b9dd9; border: 1px solid #9bd8f2; color: #fff; font: bold 10px/15px "Liberation Sans", sans-serif; text-align: center; }
.n1 { left: 768px; top: 1px; }
.n2 { left: 768px; top: 18px; }
.n3 { left: 110px; top: 119px; }
.n4 { left: 81px; top: 178px; }
.n5 { left: 96px; top: 237px; }
.n6 { left: 96px; top: 296px; }

/* right side */
.side { flex: none; width: 252px; overflow: hidden; display: flex; flex-direction: column; background: #f3f3f3; }
.side section { width: 265px; }
.inspector { height: 450px; flex: none; }
.side-tabs { display: flex; gap: 1px; height: 28px; padding: 1px 0; }
.side-tabs button { flex: 1; background: #d8d8d8; color: #222; }
.side-tabs .on { background: #1b9dd9; color: #fff; }
.group-name { display: flex; align-items: center; gap: 6px; padding: 13px 9px 0; }
.group-name svg { width: 10px; height: 8px; }
.add-case { display: flex; align-items: center; gap: 7px; padding: 11px 11px 0; font-size: 12px; line-height: 16px; }
.add-case svg { width: 12px; height: 12px; }
.add-case a { color: #2a8fbd; text-decoration: underline; }
.events { padding: 10px 0 0 29px; }
.events li { height: 21px; display: flex; align-items: center; gap: 9px; }
.events svg { width: 14px; height: 14px; }
.more-events { position: relative; margin: 15px 0 14px 9px; width: 260px; height: 22px; border: 1px solid #b4b4b4; padding-left: 7px; font-size: 12px; color: #222; }
.more-events .caret { position: absolute; left: 237px; top: 9px; color: #777; }
.adaptive { display: flex; align-items: center; border-top: 1px solid #d0d0d0; padding: 12px 0 0 11px; }
.adaptive label { display: flex; align-items: center; gap: 5px; margin-left: auto; color: #222; }
.adaptive input { appearance: none; width: 13px; height: 13px; border: 1px solid #8c8c8c; background: linear-gradient(135deg, #ccc, #fff); }
.adaptive svg { width: 18px; height: 12px; margin: 0 8px 0 17px; }
.outline { flex: 1; min-height: 0; display: flex; flex-direction: column; }
.outline .panel-head { border-top: 1px solid #b4b4b4; height: 25px; }
.outline .head-tools { right: 5px; }
.outline-body { flex: 1; display: flex; min-height: 0; overflow: hidden; }
.widgets { width: 249px; flex: none; }
.widgets li { height: 21px; display: flex; align-items: center; padding-left: 23px; gap: 10px; }
.widgets i { width: 9px; font: 14px/16px "Liberation Serif", serif; color: #555; }
.widgets .dash { height: 1px; background: #888; }
.widgets .root { padding-left: 5px; gap: 9px; font-weight: bold; color: #222; }
.widgets svg { width: 10px; height: 13px; }
.outline-scroll { width: 16px; background: linear-gradient(#a8a8a8, #a8a8a8) 1px 18px / 100% 132px no-repeat, #e8e8e8; }

/* floating input-method bar */
.ime { position: fixed; right: 42px; bottom: 132px; height: 26px; width: 210px; background: #fff; border: 1px solid #c9d9ee; display: flex; align-items: center; justify-content: space-between; padding: 0 4px 0 21px; color: #0a6fd8; font-size: 14px; line-height: 20px; }
.ime svg { width: 16px; height: 16px; }
.ime .ime-logo { position: absolute; left: -16px; top: -6px; width: 32px; height: 30px; }
```
